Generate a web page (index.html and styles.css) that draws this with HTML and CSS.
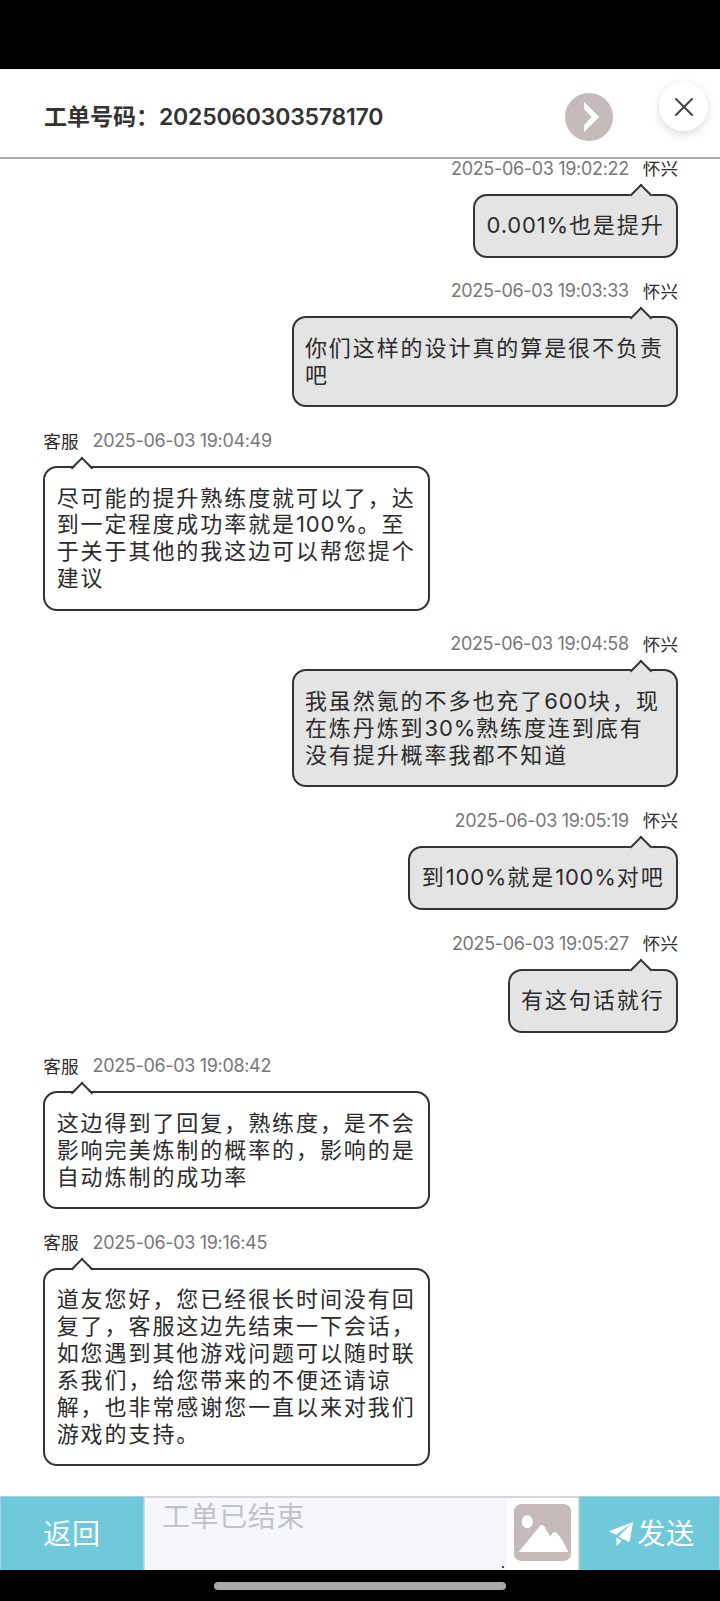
FILE: index.html
```html
<!DOCTYPE html>
<html lang="zh-CN">

<head>
    <meta charset="UTF-8">
    <meta name="viewport" content="width=device-width, initial-scale=1.0">
    <title>工单</title>
    <link rel="stylesheet" href="styles.css">
</head>

<body>
    <div class="status-bar"></div>

    <header class="header">
        <h1 class="title">工单号码：<span class="number">2025060303578170</span></h1>
        <button class="next">
            <svg viewBox="0 0 144 144">
                <circle cx="72" cy="72" r="72" fill="#c5b9ba" />
                <path d="M57 27L103 72L57 117V97L80 72L57 48Z" fill="#fff" />
            </svg>
        </button>
        <button class="close">
            <svg viewBox="0 0 18 18">
                <path d="M1 1L17 17M17 1L1 17" stroke="#444" stroke-width="2" stroke-linecap="round" />
            </svg>
        </button>
    </header>

    <main class="chat">
        <div class="msg user">
            <p class="info"><span class="time">2025-06-03 19:02:22</span><span class="name">怀兴</span></p>
            <div class="bubble"><span class="num">0.001%</span>也是提升</div>
        </div>

        <div class="msg user">
            <p class="info"><span class="time">2025-06-03 19:03:33</span><span class="name">怀兴</span></p>
            <div class="bubble long">你们这样的设计真的算是很不负责<br>吧</div>
        </div>

        <div class="msg">
            <p class="info"><span class="name">客服</span><span class="time">2025-06-03 19:04:49</span></p>
            <div class="bubble long">尽可能的提升熟练度就可以了，达<br>到一定程度成功率就是<span class="num">100%</span>。至<br>于关于其他的我这边可以帮您提个<br>建议</div>
        </div>

        <div class="msg user">
            <p class="info"><span class="time">2025-06-03 19:04:58</span><span class="name">怀兴</span></p>
            <div class="bubble long">我虽然氪的不多也充了<span class="num">600</span>块，现<br>在炼丹炼到<span class="num">30%</span>熟练度连到底有<br>没有提升概率我都不知道</div>
        </div>

        <div class="msg user">
            <p class="info"><span class="time">2025-06-03 19:05:19</span><span class="name">怀兴</span></p>
            <div class="bubble">到<span class="num">100%</span>就是<span class="num">100%</span>对吧</div>
        </div>

        <div class="msg user">
            <p class="info"><span class="time">2025-06-03 19:05:27</span><span class="name">怀兴</span></p>
            <div class="bubble">有这句话就行</div>
        </div>

        <div class="msg">
            <p class="info"><span class="name">客服</span><span class="time">2025-06-03 19:08:42</span></p>
            <div class="bubble long">这边得到了回复，熟练度，是不会<br>影响完美炼制的概率的，影响的是<br>自动炼制的成功率</div>
        </div>

        <div class="msg">
            <p class="info"><span class="name">客服</span><span class="time">2025-06-03 19:16:45</span></p>
            <div class="bubble long">道友您好，您已经很长时间没有回<br>复了，客服这边先结束一下会话，<br>如您遇到其他游戏问题可以随时联<br>系我们，给您带来的不便还请谅<br>解，也非常感谢您一直以来对我们<br>游戏的支持。</div>
        </div>
    </main>

    <footer class="footer">
        <button class="btn back">返回</button>
        <div class="input">工单已结束<i class="grip"></i></div>
        <button class="picture">
            <svg viewBox="0 0 172 172">
                <rect width="172" height="172" rx="22" fill="#c5b9ba" />
                <ellipse cx="40" cy="53" rx="17" ry="20" fill="#fff" />
                <path d="M14 145L77 68Q84 59 91 68L110 97L116 88Q122 81 130 88Q150 110 163 145Z" fill="#fff" />
            </svg>
        </button>
        <button class="btn send">
            <svg viewBox="0 0 70 70">
                <path d="M0 27L70 0L21 38Z M70 0L60 59L27 43Z M21 45L37 54L23 70Z" fill="#fff" />
            </svg>发送
        </button>
    </footer>

    <div class="nav-bar">
        <div class="handle"></div>
    </div>
</body>

</html>
```

FILE: styles.css
```css
* {
    box-sizing: border-box;
}

body {
    margin: 0;
    height: 1601px;
    display: flex;
    flex-direction: column;
    overflow: hidden;
    background-color: white;
    color: #2b2b2b;
    font-family: "Noto Sans CJK SC", sans-serif;
    text-spacing-trim: space-all;
}

button {
    padding: 0;
    border: none;
    background: none;
    font-family: inherit;
}

svg {
    display: block;
    fill: none;
}

.status-bar {
    height: 69px;
    flex: none;
    background-color: black;
}

.header {
    position: relative;
    height: 90px;
    flex: none;
    display: flex;
    align-items: center;
    padding: 7px 107px 0 44px;
    justify-content: space-between;
    border-bottom: 2px solid #aaa;
}

.title {
    margin: 0 0 2px;
    font-size: 23px;
    font-weight: bold;
    line-height: 30px;
    white-space: nowrap;
    color: #333;
}

.number {
    font-family: Inter, sans-serif;
    font-weight: 600;
    font-size: 23px;
    letter-spacing: -0.22px;
}

.next svg {
    width: 48px;
    height: 48px;
}

/* floats over the header */
.close {
    position: absolute;
    top: 13px;
    right: 12px;
    width: 49px;
    height: 49px;
    display: flex;
    align-items: center;
    justify-content: center;
    border-radius: 50%;
    background-color: white;
    box-shadow: 0 3px 10px rgba(0, 0, 0, 0.15);
}

.close svg {
    width: 18px;
    height: 18px;
}

.chat {
    flex: 1;
    min-height: 0;
    margin-top: 2px;
    padding: 0 42px 29.7px 43.3px;
    display: flex;
    flex-direction: column;
    justify-content: flex-end;
    gap: 19.8px;
    overflow: hidden;
}

.msg {
    flex: none;
    display: flex;
    flex-direction: column;
    align-items: flex-start;
}

.user {
    align-items: flex-end;
}

.info {
    margin: 0 0 12px;
    height: 27px;
    display: flex;
    align-items: center;
    gap: 14px;
    font-size: 18px;
    line-height: 27px;
}

.name {
    font-size: 17.6px;
    margin-top: -1px;
}

.time {
    font-family: Inter, sans-serif;
    letter-spacing: -0.33px;
    color: #777;
}

.bubble {
    position: relative;
    padding: 14.5px 11.4px 18.5px;
    border: 2px solid #333;
    border-radius: 14px;
    background-color: white;
    font-size: 22px;
    line-height: 26.9px;
    letter-spacing: 1.93px;
    white-space: nowrap;
}

.long {
    width: 386.5px;
}

.user .bubble {
    background-color: #e4e4e4;
}

.bubble::before {
    content: "";
    position: absolute;
    top: -8.5px;
    left: 29px;
    width: 14px;
    height: 14px;
    border: 2px solid #333;
    border-right: none;
    border-bottom: none;
    background: linear-gradient(135deg, white 55%, transparent 55%);
    transform: rotate(45deg);
}

.user .bubble::before {
    left: auto;
    right: 27.5px;
    background: #e4e4e4;
}

.num {
    font-family: Inter, sans-serif;
    letter-spacing: 0.82px;
    line-height: 0;
}

.footer {
    height: 74px;
    flex: none;
    display: flex;
}

.btn {
    display: flex;
    align-items: center;
    justify-content: center;
    padding-bottom: 3px;
    border: 1px solid #a5d3dc;
    border-bottom: none;
    background-color: #70c9db;
    color: white;
    font-size: 28px;
    letter-spacing: 0.7px;
}

.back {
    width: 144px;
}

.send {
    width: 141px;
    padding-left: 5px;
}

.send svg {
    width: 24px;
    height: 24px;
    margin: 4px 4px 0 0;
}

.input {
    position: relative;
    width: 363px;
    padding: 0 17px;
    border-top: 2px solid #ddd5d5;
    border-left: 1px solid #ddd5d5;
    background-color: #f5f7fb;
    color: #c2c3c8;
    font-size: 28px;
    line-height: 35px;
    letter-spacing: 0.6px;
}

.grip {
    position: absolute;
    right: 3px;
    bottom: 2px;
    width: 2px;
    height: 2px;
    background-color: #444;
}

.picture {
    width: 72px;
    display: flex;
    align-items: center;
    justify-content: center;
    border-top: 2px solid #ddd5d5;
    border-right: 1px solid #ddd5d5;
}

.picture svg {
    width: 57px;
    height: 57px;
    margin-bottom: 3px;
}

.nav-bar {
    height: 31px;
    flex: none;
    display: flex;
    justify-content: center;
    padding-top: 12px;
    background-color: black;
}

.handle {
    width: 292px;
    height: 8px;
    border-radius: 4px;
    background-color: #a9a9a9;
}
```
